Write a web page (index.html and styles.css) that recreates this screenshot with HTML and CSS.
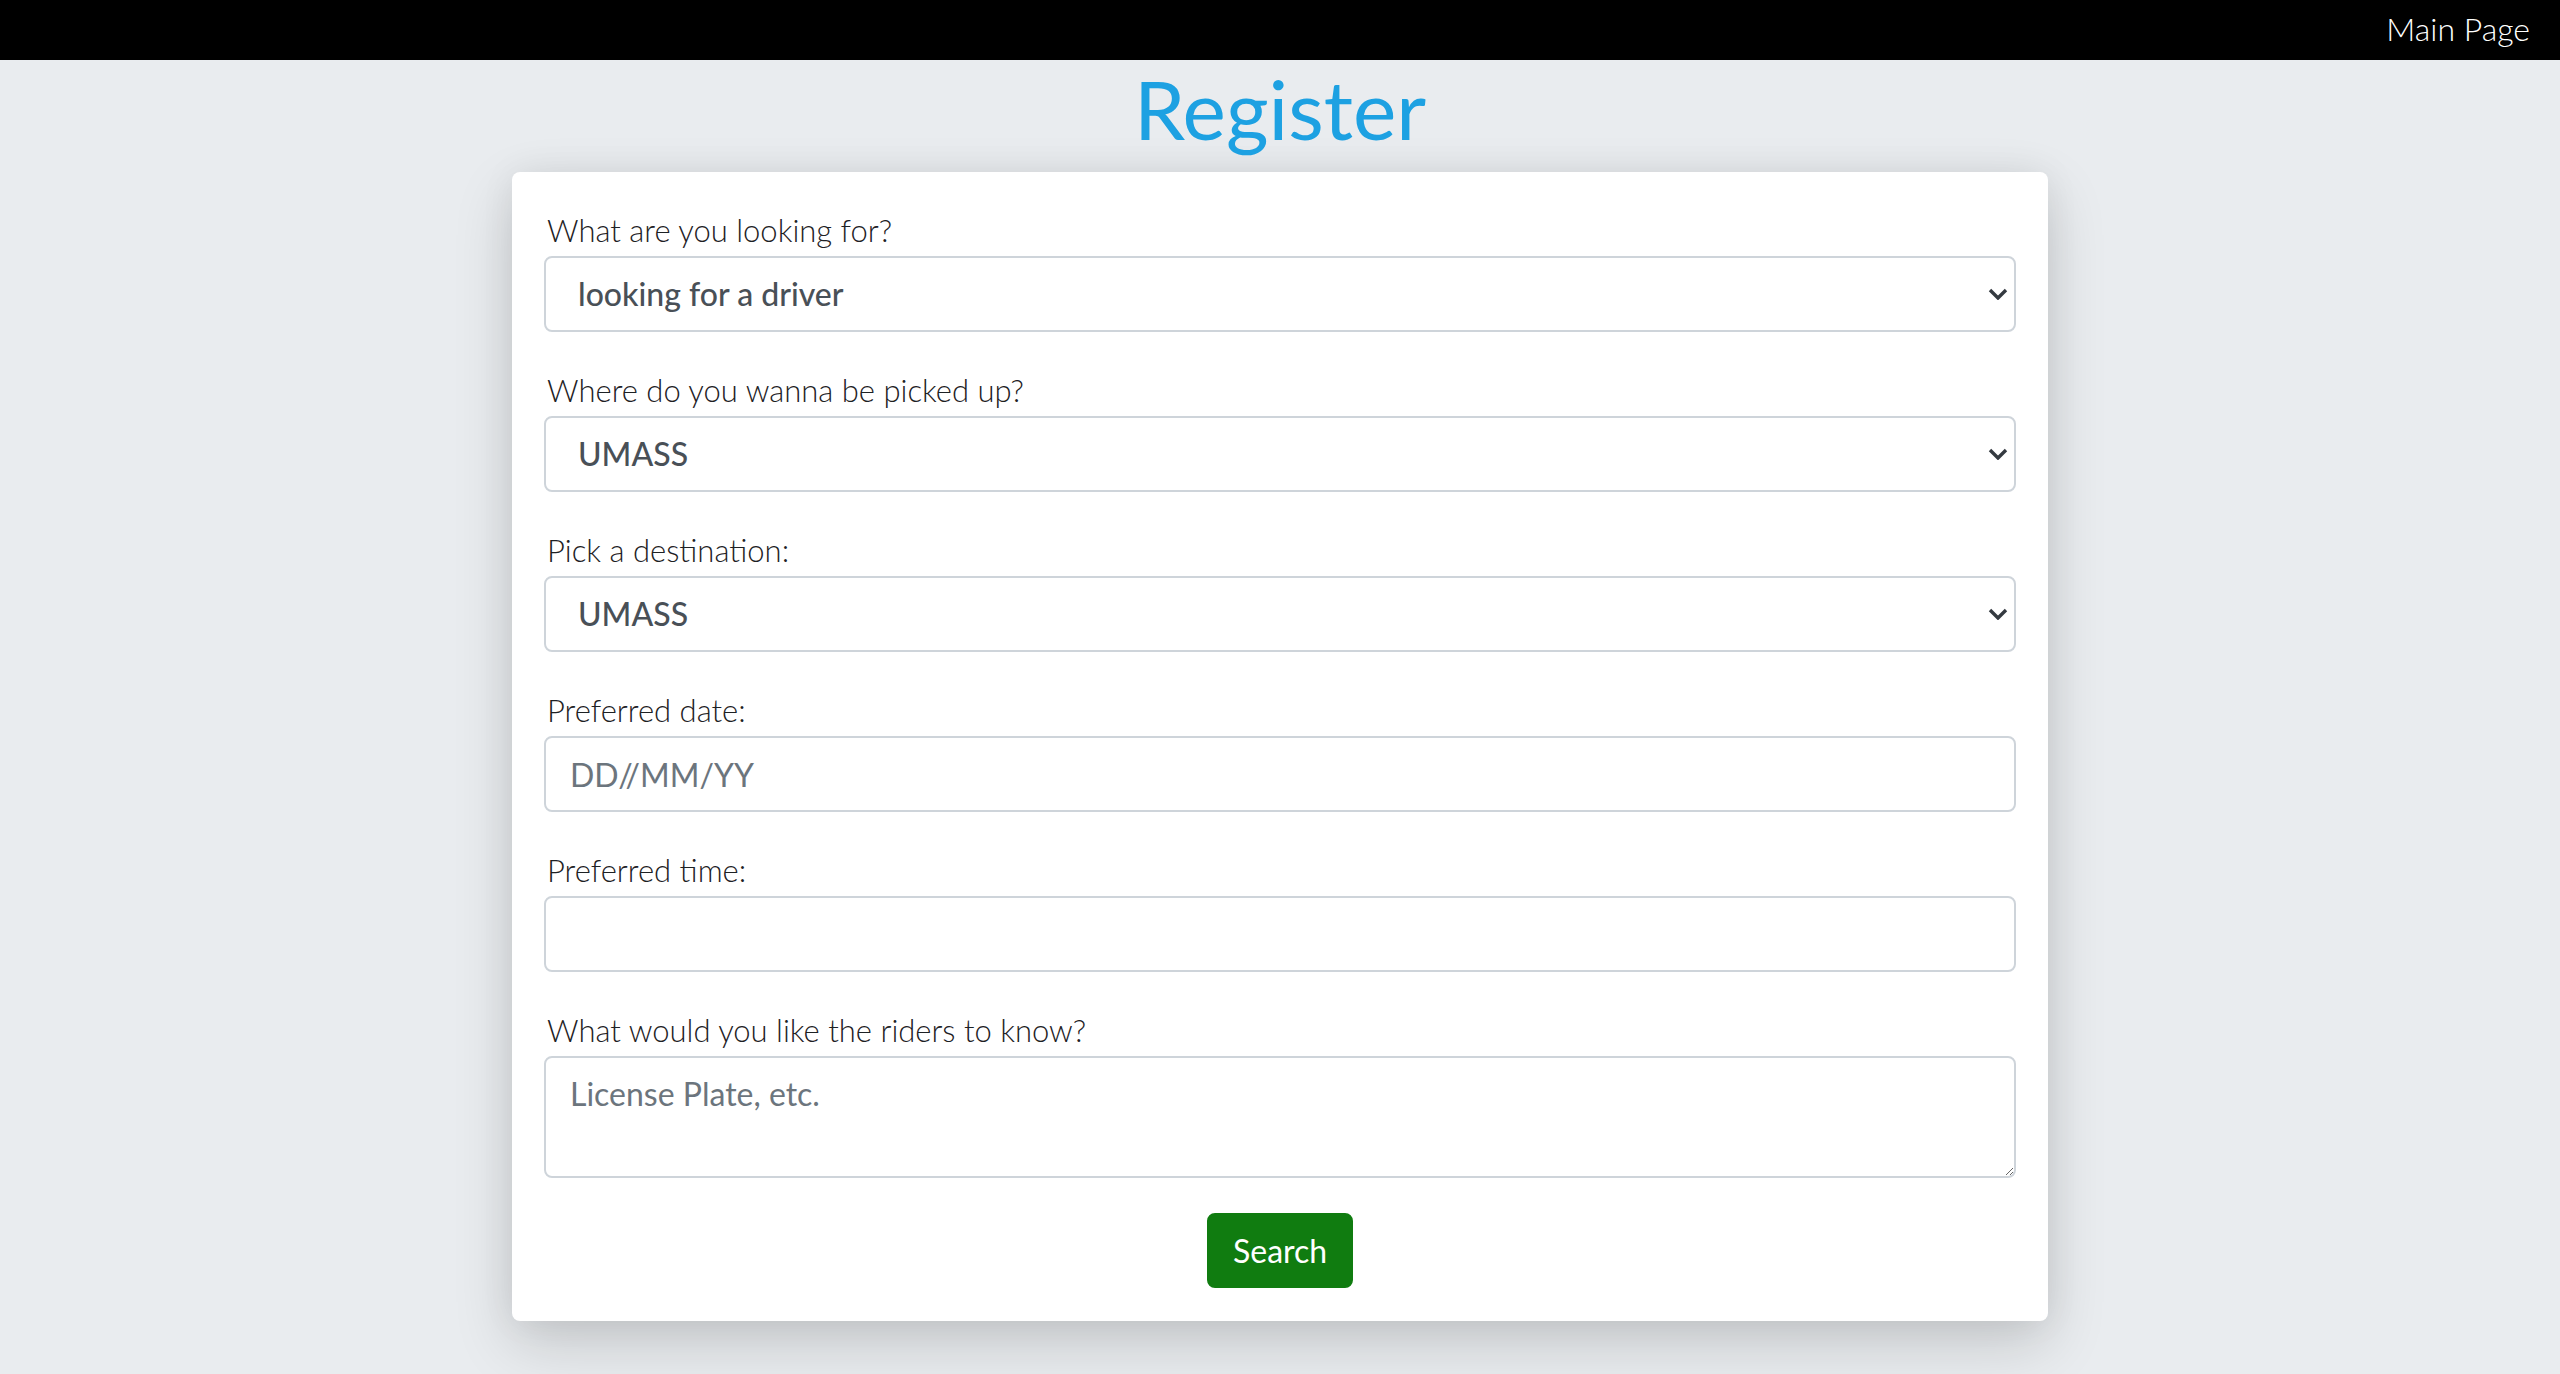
FILE: index.html
```html
<!DOCTYPE html>
<html lang="en">
<head>
<meta charset="utf-8">
<title>Register</title>
<link rel="stylesheet" href="styles.css">
</head>
<body>
<nav class="topbar">
  <a class="nav-link" href="#">Main Page</a>
</nav>
<h1 class="title">Register</h1>
<main class="card">
  <form class="form">
    <div class="group">
      <label class="label" for="kind">What are you looking for?</label>
      <div class="select-wrap">
        <select id="kind" class="control select">
          <option>looking for a driver</option>
        </select>
        <svg class="chevron" viewBox="0 0 20 12" width="20" height="12"><path d="M2 2 L10 10 L18 2" fill="none" stroke="#343a40" stroke-width="3.4"/></svg>
      </div>
    </div>
    <div class="group">
      <label class="label" for="pick">Where do you wanna be picked up?</label>
      <div class="select-wrap">
        <select id="pick" class="control select">
          <option>UMASS</option>
        </select>
        <svg class="chevron" viewBox="0 0 20 12" width="20" height="12"><path d="M2 2 L10 10 L18 2" fill="none" stroke="#343a40" stroke-width="3.4"/></svg>
      </div>
    </div>
    <div class="group">
      <label class="label" for="dest">Pick a destination:</label>
      <div class="select-wrap">
        <select id="dest" class="control select">
          <option>UMASS</option>
        </select>
        <svg class="chevron" viewBox="0 0 20 12" width="20" height="12"><path d="M2 2 L10 10 L18 2" fill="none" stroke="#343a40" stroke-width="3.4"/></svg>
      </div>
    </div>
    <div class="group">
      <label class="label" for="date">Preferred date:</label>
      <input id="date" class="control" type="text" placeholder="DD//MM/YY">
    </div>
    <div class="group">
      <label class="label" for="time">Preferred time:</label>
      <input id="time" class="control" type="text">
    </div>
    <div class="group">
      <label class="label" for="notes">What would you like the riders to know?</label>
      <textarea id="notes" class="control area" rows="2" placeholder="License Plate, etc."></textarea>
    </div>
    <div class="actions">
      <button type="button" class="btn">Search</button>
    </div>
  </form>
</main>
</body>
</html>
```
FILE: styles.css
```css
* { box-sizing: border-box; }
html, body { margin: 0; padding: 0; }
body {
  background: #e9ecef;
  font-family: Lato, "Open Sans", sans-serif;
  color: #212529;
  min-height: 1374px;
}
.topbar {
  background: #000;
  height: 60px;
  display: flex;
  align-items: center;
  justify-content: flex-end;
  padding: 0 30px 0 0;
}
.nav-link {
  color: #fff;
  text-decoration: none;
  font-size: 32px;
  font-weight: 300;
  line-height: 1;
  margin-top: -3px;
}
.title {
  margin: 0 0 16px;
  text-align: center;
  color: #1da1e2;
  font-size: 82px;
  font-weight: 400;
  line-height: 96px;
}
.card {
  width: 1536px;
  margin: 0 auto;
  background: #fff;
  border-radius: 8px;
  padding: 32px 32px 33px;
  box-shadow: 0 22px 60px rgba(0, 0, 0, 0.16), 0 0 36px rgba(0, 0, 0, 0.06);
}
.form {
  display: flex;
  flex-direction: column;
  gap: 32px;
}
.group {
  display: flex;
  flex-direction: column;
}
.label {
  font-size: 31px;
  font-weight: 300;
  line-height: 48px;
  padding: 2px 0 0 3px;
  margin-bottom: 2px;
  color: #1d2124;
}
.select-wrap {
  position: relative;
}
.control {
  display: block;
  width: 100%;
  height: 76px;
  font-family: Lato, "Open Sans", sans-serif;
  font-size: 32px;
  line-height: 48px;
  padding: 12px 24px;
  color: #495057;
  background: #fff;
  border: 2px solid #ced4da;
  border-radius: 8px;
  outline: none;
}
.control::placeholder {
  color: #6c757d;
  opacity: 1;
}
.select {
  appearance: none;
  -webkit-appearance: none;
  padding-left: 32px;
  font-weight: 500;
}
.chevron {
  position: absolute;
  right: 8px;
  top: 32px;
  pointer-events: none;
}
.area {
  height: 122px;
  resize: vertical;
}
.actions {
  display: flex;
  justify-content: center;
  margin-top: 3px;
}
.btn {
  font-family: Lato, "Open Sans", sans-serif;
  font-size: 32px;
  font-weight: 400;
  line-height: 48px;
  color: #fff;
  background: #107c10;
  border: 2px solid #107c10;
  border-radius: 8px;
  padding: 12px 24px;
  height: 75px;
  width: 146px;
  cursor: pointer;
}
```
